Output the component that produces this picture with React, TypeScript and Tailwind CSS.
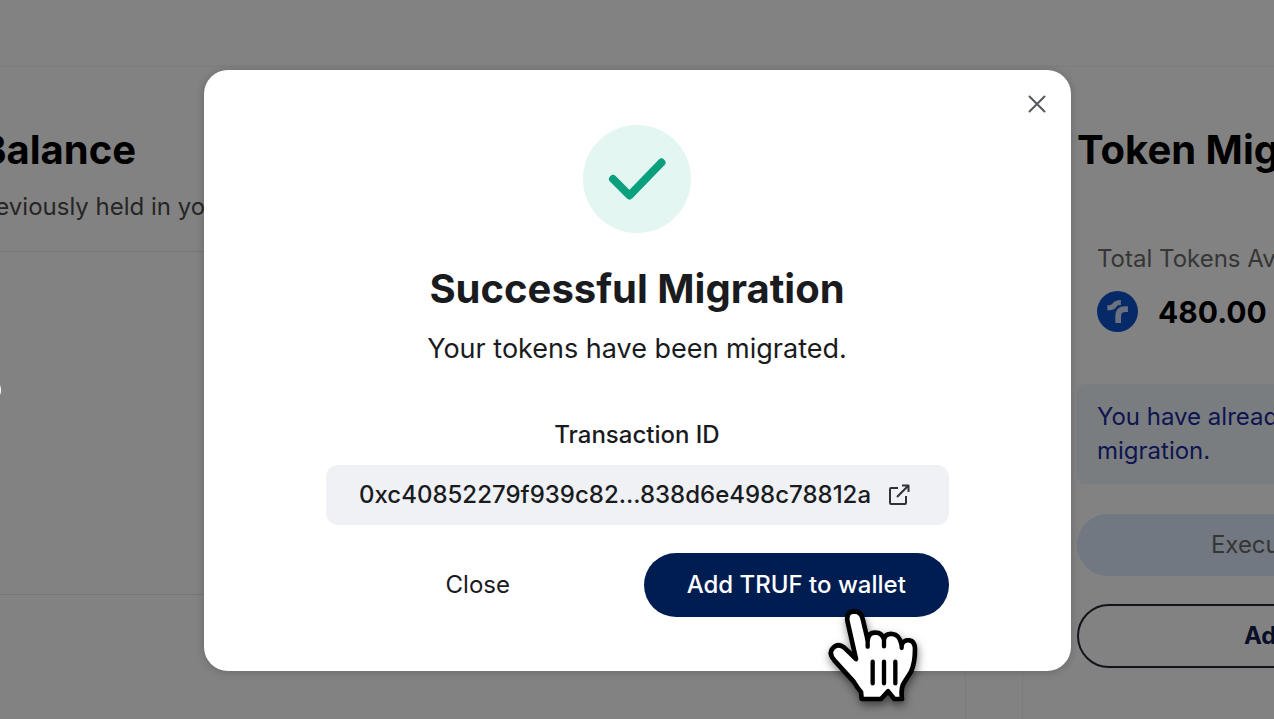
import React from 'react';

function TokenLogo() {
  return (
    <svg className="w-[41px] h-[41px] shrink-0" viewBox="0 0 122 122" aria-hidden="true">
      <circle cx="61" cy="61" r="61" fill="#0c54cc" />
      <g fill="none" stroke="#d3def8">
        <path d="M31 50 H36 Q48 50 53 41 Q57 34 71 34" strokeWidth="15" />
        <path d="M92 54 H84 Q63 54 63 75 V95" strokeWidth="17" />
      </g>
    </svg>
  );
}

function HandCursor() {
  return (
    <svg
      className="pointer-events-none absolute left-[166px] top-[37px] h-[129px] w-[130px] drop-shadow-[1px_4px_4px_rgba(0,0,0,0.5)]"
      viewBox="0 0 390 387"
      aria-hidden="true"
    >
      <path
        d="M112 92 Q109 65 132 64 Q153 64 158 86 L173 150 Q176 126 198 128 Q215 128 222 147 Q226 130 248 132 Q267 133 275 164 Q282 149 298 151 Q315 153 315 178 Q315 220 303 245 L281 280 Q272 295 276 327 L253 327 L234 304 L213 327 L155 327 L153 306 Q143 295 131 275 L73 211 Q54 189 69 174 Q84 158 103 173 L138 207 Z"
        fill="#fff"
        stroke="#000"
        strokeWidth="14"
        strokeLinejoin="round"
      />
      <path
        d="M173 145 V170 M222 145 V169 M275 160 V174 M188 215 V280 M222 215 V280 M256 215 V280"
        fill="none"
        stroke="#000"
        strokeWidth="13"
        strokeLinecap="round"
      />
    </svg>
  );
}

function MigrationPage() {
  return (
    <div className="flex h-screen min-w-[1600px] flex-col bg-white">
      <header className="h-[67px] shrink-0 border-b border-gray-100" />
      <main className="flex flex-1">
        <section className="w-[966px] shrink-0 border-r border-gray-100">
          <div className="h-[185px] border-b border-gray-200 pt-[58px]">
            <h2 className="-ml-5 text-[40px] leading-[50px] font-bold text-black">Balance</h2>
            <p className="-ml-7 mt-4 text-2xl leading-8 text-[#4b4b4b]">previously held in your</p>
          </div>
          <div className="h-[343px] border-b border-gray-200" />
        </section>
        <section className="ml-[56px] flex-1 border-l border-gray-100 pt-[58px] pl-[54px]">
          <h2 className="text-[40px] leading-[50px] font-bold text-black">Token Migration</h2>
          <div className="mt-[68px] pl-5">
            <p className="text-2xl leading-8 text-[#6b6b6b]">Total Tokens Available</p>
            <div className="mt-4 flex items-center gap-5">
              <TokenLogo />
              <span className="text-[30px] leading-10 font-bold text-black">480.00</span>
            </div>
          </div>
          <div className="mt-[52px] w-[472px] rounded-lg bg-[#eef6fc] px-5 py-4 text-2xl leading-[34px] text-[#1c2a9c]">
            You have already completed
            <br />
            migration.
          </div>
          <button
            type="button"
            disabled
            className="mt-[30px] block h-[62px] w-[472px] rounded-full bg-[#dfebfd] text-2xl text-[#6a6a6a]"
          >
            Execute Migration
          </button>
          <button
            type="button"
            className="mt-7 block h-16 w-[472px] rounded-full border-2 border-[#222831] text-2xl font-bold text-[#11204e]"
          >
            Add Tokens
          </button>
        </section>
      </main>
    </div>
  );
}

function SuccessDialog() {
  return (
    <div
      role="dialog"
      aria-modal="true"
      aria-labelledby="dialog-title"
      className="relative flex w-full max-w-[867px] flex-col items-center rounded-3xl bg-white px-[122px] pt-[55px] pb-[54px] text-[#1a1b1e] shadow-[0_1px_8px_rgba(0,0,0,0.2)]"
    >
      <button type="button" aria-label="Close dialog" className="absolute top-[10px] right-[10px] p-3">
        <svg className="size-6" viewBox="0 0 24 24" fill="none" stroke="#55585c" strokeWidth="2" strokeLinecap="round">
          <path d="M4.5 4.5 L19.5 19.5 M19.5 4.5 L4.5 19.5" />
        </svg>
      </button>

      {/* Success badge */}
      <div className="flex size-[108px] items-center justify-center rounded-full bg-[#e3f6f2]">
        <svg className="h-[44px] w-[60px]" viewBox="0 0 60 44" fill="none" stroke="#0aa07e" strokeWidth="8">
          <path d="M6 22 L22.500 38.500 L54.500 5.500" strokeLinecap="round" strokeLinejoin="round" />
        </svg>
      </div>

      <h1 id="dialog-title" className="mt-8 text-[40px] leading-[48px] font-bold">
        Successful Migration
      </h1>
      <p className="mt-4 text-[27px] leading-10">Your tokens have been migrated.</p>

      <p className="mt-[50px] text-2xl leading-8 font-medium">Transaction ID</p>
      <a
        href="#transaction"
        className="mt-[14px] flex h-[60px] w-full items-center justify-center gap-4 rounded-xl bg-[#eff1f4] pr-1 text-2xl font-medium"
      >
        0xc40852279f939c82...838d6e498c78812a
        <svg className="size-6" viewBox="0 0 24 24" fill="none" stroke="#303236" strokeWidth="2" strokeLinejoin="round">
          <path d="M11 5 H4 Q3 5 3 6 V20 Q3 21 4 21 H18 Q19 21 19 20 V13" />
          <path d="M10 14 L21.500 2.500 M15 2.500 H21.500 V9" />
        </svg>
      </a>

      <div className="mt-7 grid w-full grid-cols-2 gap-[14px]">
        <button type="button" className="h-16 rounded-full text-2xl">
          Close
        </button>
        <div className="relative">
          <button type="button" className="h-16 w-full rounded-full bg-[#001d52] text-2xl font-medium text-white">
            Add TRUF to wallet
          </button>
          <HandCursor />
        </div>
      </div>
    </div>
  );
}

export default function App() {
  return (
    <div className="relative h-screen overflow-hidden font-['Inter',sans-serif]">
      <MigrationPage />
      <div className="absolute inset-0 flex items-center justify-center bg-black/49 pt-[22px]">
        <SuccessDialog />
        {/* Carousel handle peeking in from the left edge */}
        <span className="absolute top-[377px] -left-[25px] size-[26px] rounded-full bg-white" />
      </div>
    </div>
  );
}
